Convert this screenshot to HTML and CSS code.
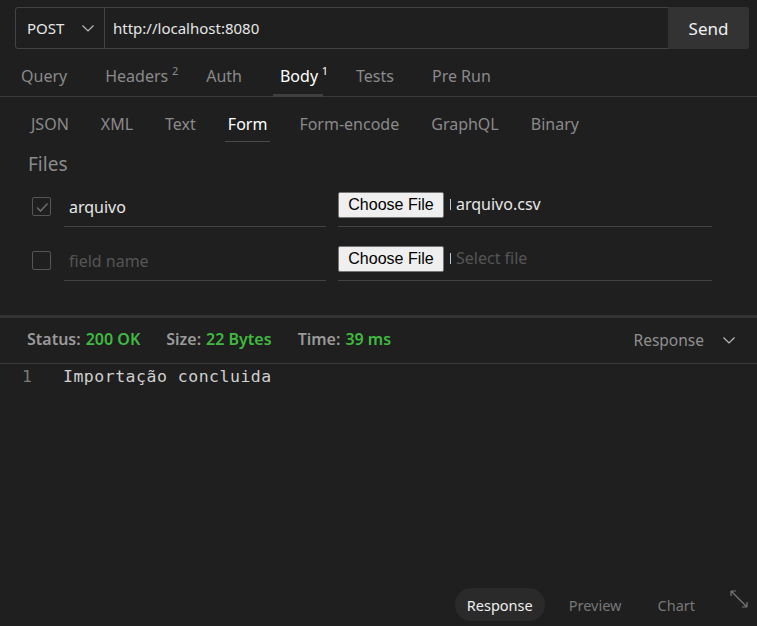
FILE: index.html
```html
<!DOCTYPE html>
<html>
<head>
<meta charset="utf-8">
<link rel="stylesheet" href="styles.css">
</head>
<body>
<div class="app">
  <div class="urlbar">
    <div class="method">
      <span>POST</span>
      <svg class="chev" width="14" height="10" viewBox="0 0 14 10"><path d="M1.5 2.5 L7 8 L12.5 2.5" fill="none" stroke="#bbb" stroke-width="1.2"/></svg>
    </div>
    <div class="url">http://localhost:8080</div>
    <button class="send">Send</button>
  </div>

  <div class="tabs">
    <div class="tab">Query</div>
    <div class="tab">Headers<sup>2</sup></div>
    <div class="tab">Auth</div>
    <div class="tab active">Body<sup>1</sup></div>
    <div class="tab">Tests</div>
    <div class="tab">Pre Run</div>
  </div>

  <div class="subtabs">
    <div class="sub">JSON</div>
    <div class="sub">XML</div>
    <div class="sub">Text</div>
    <div class="sub active">Form</div>
    <div class="sub">Form-encode</div>
    <div class="sub">GraphQL</div>
    <div class="sub">Binary</div>
  </div>

  <div class="files-title">Files</div>

  <div class="frow">
    <div class="check checked">
      <svg width="16" height="16" viewBox="0 0 16 16"><path d="M3 8.5 L6.5 12 L13.5 4.5" fill="none" stroke="#6a6a6a" stroke-width="1.6"/></svg>
    </div>
    <div class="field name">arquivo</div>
    <div class="field file">
      <span class="choose">Choose File</span><span class="caret"></span><span class="fname">arquivo.csv</span>
    </div>
  </div>
  <div class="frow">
    <div class="check"></div>
    <div class="field name ph">field name</div>
    <div class="field file">
      <span class="choose">Choose File</span><span class="caret"></span><span class="fname ph">Select file</span>
    </div>
  </div>

  <div class="splitter"></div>

  <div class="status">
    <span class="lbl">Status:</span><span class="val">200 OK</span>
    <span class="lbl">Size:</span><span class="val">22 Bytes</span>
    <span class="lbl">Time:</span><span class="val">39 ms</span>
    <div class="resp-dd">
      <span>Response</span>
      <svg width="14" height="10" viewBox="0 0 14 10"><path d="M1.5 2.5 L7 8 L12.5 2.5" fill="none" stroke="#bbb" stroke-width="1.2"/></svg>
    </div>
  </div>

  <div class="code">
    <div class="line"><span class="ln">1</span><span class="txt">Importação concluida</span></div>
  </div>

  <div class="bottom">
    <div class="btab active">Response</div>
    <div class="btab">Preview</div>
    <div class="btab">Chart</div>
    <svg class="expand" width="20" height="20" viewBox="0 0 20 20"><path d="M2 2 L18 18 M2 2 L2 7 M2 2 L7 2 M18 18 L18 13 M18 18 L13 18" fill="none" stroke="#777" stroke-width="1.2"/></svg>
  </div>
</div>
</body>
</html>
```

FILE: styles.css
```css
* { box-sizing: border-box; }
html, body { margin: 0; padding: 0; }
body {
  background: #1f1f1f;
  font-family: "Noto Sans", "Open Sans", sans-serif;
  color: #ccc;
  width: 757px;
  height: 626px;
  overflow: hidden;
}
.app { display: flex; flex-direction: column; height: 626px; }

.urlbar {
  display: flex;
  margin: 7px 8px 0 15px;
  height: 42px;
  border: 1px solid #444;
  border-radius: 3px;
}
.method {
  width: 89px;
  border-right: 1px solid #444;
  display: flex;
  align-items: center;
  justify-content: space-between;
  padding: 0 9px 0 11px;
  font-size: 15px;
  color: #e6e6e6;
}
.url {
  flex: 1;
  display: flex;
  align-items: center;
  padding-left: 8px;
  font-size: 15px;
  color: #e6e6e6;
}
.send {
  width: 81px;
  margin: -1px -1px -1px 0;
  background: #333;
  border: none;
  border-radius: 0 3px 3px 0;
  color: #f0f0f0;
  font-family: inherit;
  font-size: 17px;
}

.tabs {
  display: flex;
  gap: 24px;
  height: 48px;
  border-bottom: 1px solid #3a3a3a;
  padding-left: 14px;
}
.tab {
  padding: 6px 7px 0;
  display: flex;
  align-items: center;
  font-size: 16px;
  color: #8a8a8a;
  position: relative;
}
.tab sup {
  position: absolute;
  font-size: 11px;
  line-height: 1;
  top: 16px;
  right: -3px;
}
.tab.active { color: #fff; }
.tab.active::after {
  content: "";
  position: absolute;
  left: 0; right: 2px;
  bottom: -1px;
  height: 3px;
  background: #3f3f3f;
}

.subtabs {
  display: flex;
  gap: 26px;
  padding-left: 28px;
  height: 45px;
}
.sub {
  padding: 8px 3px 0;
  display: flex;
  align-items: center;
  font-size: 16px;
  color: #8a8a8a;
  position: relative;
}
.sub.active { color: #fff; }
.sub.active::after {
  content: "";
  position: absolute;
  left: 0; right: 0;
  bottom: 0;
  height: 1px;
  background: #4a4a4a;
}

.files-title {
  font-size: 19px;
  color: #8a8a8a;
  padding-left: 28px;
  margin-top: 9px;
  height: 22px;
  line-height: 26px;
}

.frow {
  display: flex;
  align-items: flex-end;
  height: 54px;
  padding-left: 32px;
}
.check {
  width: 19px;
  height: 19px;
  border: 1px solid #555;
  border-radius: 2px;
  margin-bottom: 11px;
  display: flex;
  align-items: center;
  justify-content: center;
}
.field {
  height: 37px;
  border-bottom: 1px solid #444;
  display: flex;
  align-items: center;
  font-size: 16px;
}
.name {
  width: 262px;
  margin-left: 13px;
  padding-left: 5px;
  color: #e8e8e8;
  padding-bottom: 3px;
}
.ph { color: #555 !important; }
.file {
  width: 374px;
  margin-left: 12px;
  color: #e8e8e8;
  align-items: flex-start;
}
.choose {
  display: inline-block;
  height: 26px;
  width: 106px;
  background: #efefef;
  border: 1px solid #767676;
  border-radius: 2px;
  color: #000;
  font-family: "Liberation Sans", Arial, sans-serif;
  font-size: 16px;
  line-height: 23px;
  text-align: center;
  margin-top: 2px;
}
.caret {
  width: 1px;
  height: 11px;
  background: #b8c8d8;
  margin: 9px 5px 0 6px;
}
.fname { margin-top: 3px; }

.splitter {
  margin-top: 34px;
  height: 3px;
  background: #333;
}

.status {
  display: flex;
  align-items: center;
  height: 46px;
  padding-left: 27px;
  padding-right: 21px;
  padding-bottom: 3px;
  border-bottom: 1px solid #3a3a3a;
  font-size: 16px;
  font-weight: 600;
}
.lbl { color: #9a9a9a; margin-right: 5px; }
.val { color: #3fb93f; margin-right: 26px; }
.resp-dd {
  margin-left: auto;
  display: flex;
  align-items: center;
  gap: 18px;
  font-weight: 400;
  color: #8f8f8f;
  font-size: 15.5px;
  padding-top: 2px;
}

.code { flex: 1; padding-top: 0; }
.line {
  display: flex;
  height: 24px;
  align-items: center;
  font-family: "DejaVu Sans Mono", monospace;
  font-size: 16.5px;
}
.ln { width: 63px; padding-left: 22px; color: #7a7a7a; }
.txt { color: #d0d0d0; letter-spacing: 0.5px; }

.bottom {
  display: flex;
  align-items: center;
  justify-content: flex-end;
  height: 37px;
  margin-bottom: 3px;
  padding-right: 8px;
}
.btab {
  font-size: 14.5px;
  color: #777;
  padding: 0 12px;
  height: 33px;
  display: flex;
  align-items: center;
}
.btab + .btab { margin-left: 12px; }
.btab.active {
  background: #2a2a2a;
  color: #eee;
  border-radius: 16px;
  width: 90px;
  justify-content: center;
}
.expand { margin-left: 22px; margin-top: -12px; }
```
